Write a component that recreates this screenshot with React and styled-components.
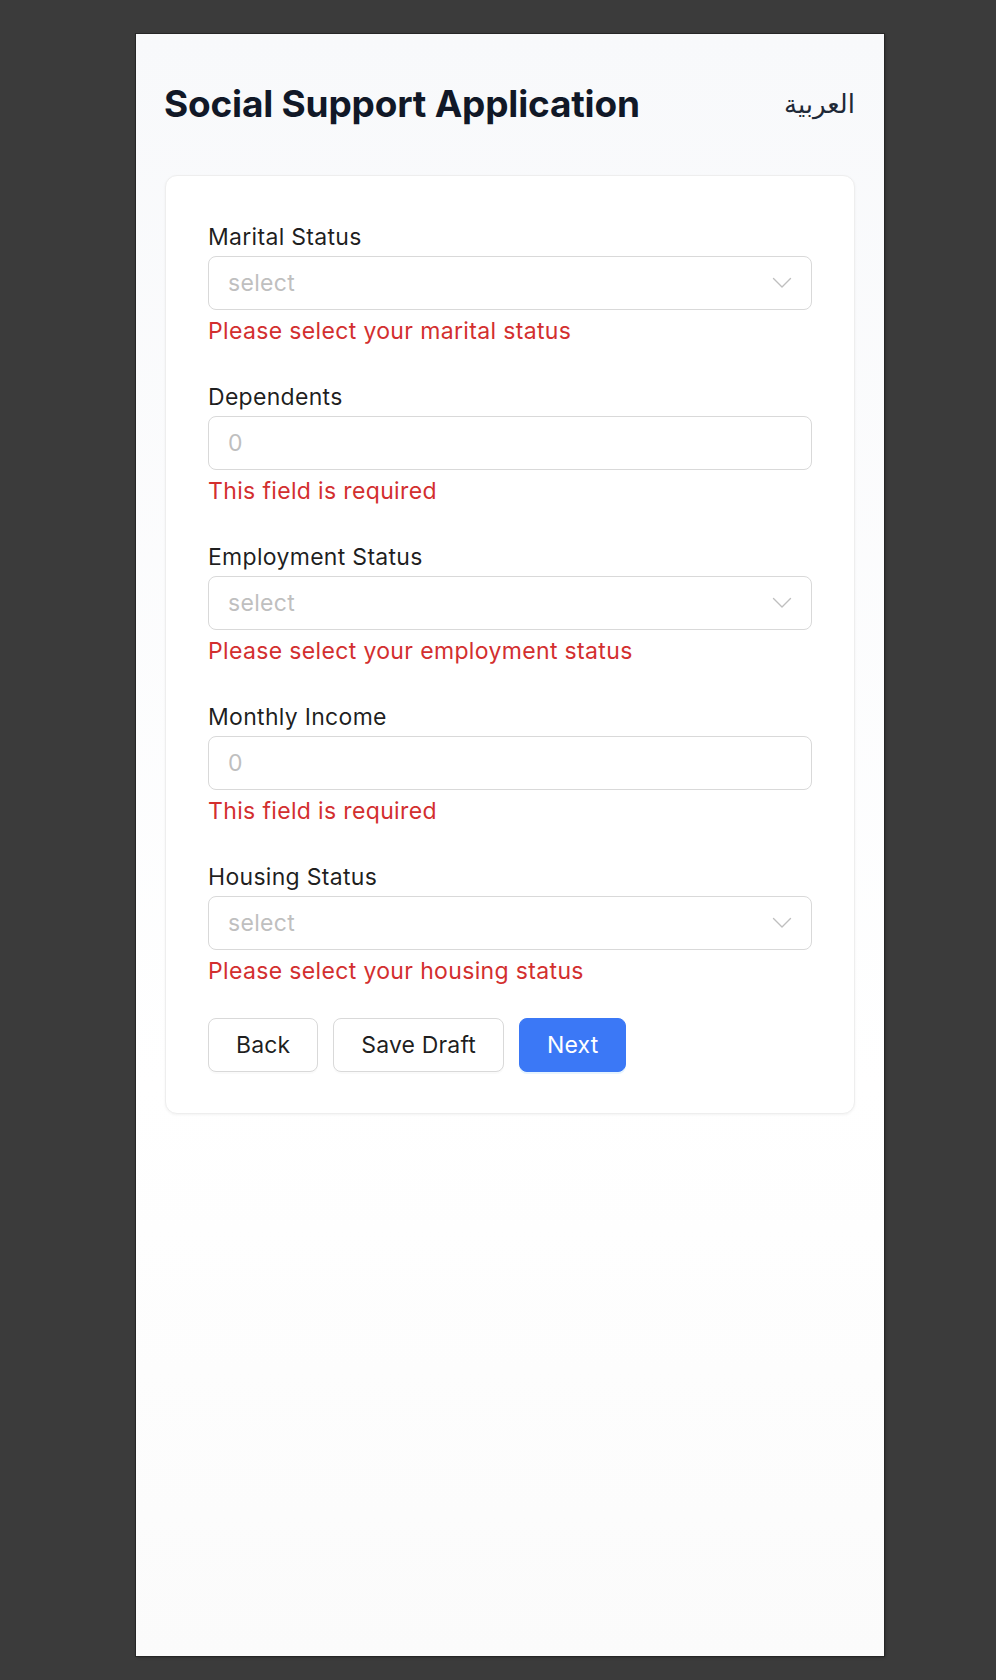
import React from "react";
import styled, { createGlobalStyle } from "styled-components";

const GlobalStyle = createGlobalStyle`
	body {
		margin: 0;
		background: #3b3b3b;
		font-family: Inter, "Noto Sans", sans-serif;
	}
`;

const fields = [
	{ label: "Marital Status", type: "select", placeholder: "select", error: "Please select your marital status" },
	{ label: "Dependents", type: "input", placeholder: "0", error: "This field is required" },
	{ label: "Employment Status", type: "select", placeholder: "select", error: "Please select your employment status" },
	{ label: "Monthly Income", type: "input", placeholder: "0", error: "This field is required" },
	{ label: "Housing Status", type: "select", placeholder: "select", error: "Please select your housing status" },
];

const Chevron = () => (
	<svg width="20" height="12" viewBox="0 0 20 12" fill="none">
		<polyline
			points="1.5,1.5 10,10 18.5,1.5"
			stroke="#bfbfbf"
			strokeWidth="1.4"
			strokeLinejoin="round"
			strokeLinecap="round"
		/>
	</svg>
);

const Field = ({ label, type, placeholder, error }) => (
	<FieldBlock>
		<Label>{label}</Label>
		<Control>
			<Placeholder>{placeholder}</Placeholder>
			{type === "select" && <Chevron />}
		</Control>
		<ErrorText>{error}</ErrorText>
	</FieldBlock>
);

const App = () => {
	return (
		<>
			<GlobalStyle />
			<Frame>
				<Window>
					<Header>
						<Title>Social Support Application</Title>
						<LangSwitch lang="ar" dir="rtl">العربية</LangSwitch>
					</Header>
					<Card>
						<Fields>
							{fields.map((f) => (
								<Field key={f.label} {...f} />
							))}
						</Fields>
						<ButtonRow>
							<Button>Back</Button>
							<Button>Save Draft</Button>
							<Button primary>Next</Button>
						</ButtonRow>
					</Card>
				</Window>
			</Frame>
		</>
	);
};

export default App;

const Frame = styled.div`
	padding: 34px 112px 24px 136px;
	box-sizing: border-box;
	height: 1680px;
`;

const Window = styled.div`
	width: 748px;
	height: 1622px;
	background: linear-gradient(to bottom, #f8f9fb 0%, #ffffff 65%, #fbfbfb 100%);
	box-shadow: 0 0 0 1px #262626, 1px 1px 3px rgba(0, 0, 0, 0.4);
	overflow: hidden;
`;

const Header = styled.div`
	display: flex;
	align-items: center;
	justify-content: space-between;
	padding: 46px 29px 0 28px;
	height: 48px;
`;

const Title = styled.h1`
	margin: 0;
	font-size: 37px;
	line-height: 48px;
	font-weight: 700;
	letter-spacing: -0.2px;
	color: #111827;
`;

const LangSwitch = styled.span`
	font-family: "DejaVu Sans", "Noto Sans", sans-serif;
	font-size: 26px;
	color: #1f2937;
	cursor: pointer;
`;

const Card = styled.div`
	margin: 47px 29px 0 29px;
	padding: 47px 42px 41px 42px;
	background: #fff;
	border: 1px solid #eeeeee;
	border-radius: 12px;
	box-shadow: 0 1px 3px rgba(0, 0, 0, 0.05);
`;

const Fields = styled.div`
	display: flex;
	flex-direction: column;
	gap: 38px;
`;

const FieldBlock = styled.div`
	display: flex;
	flex-direction: column;
`;

const Label = styled.label`
	font-size: 23px;
	line-height: 28px;
	letter-spacing: 0.3px;
	color: rgba(0, 0, 0, 0.88);
	margin-bottom: 5px;
`;

const Control = styled.div`
	height: 54px;
	box-sizing: border-box;
	border: 1px solid #d9d9d9;
	border-radius: 8px;
	background: #fff;
	display: flex;
	align-items: center;
	justify-content: space-between;
	padding: 0 19px 0 19px;
`;

const Placeholder = styled.span`
	font-size: 23px;
	letter-spacing: 0.3px;
	color: #bfbfbf;
`;

const ErrorText = styled.div`
	margin-top: 7px;
	font-size: 23px;
	line-height: 28px;
	letter-spacing: 0.35px;
	color: #d32f2f;
`;

const ButtonRow = styled.div`
	display: flex;
	gap: 15px;
	margin-top: 33px;
`;

const Button = styled.button`
	height: 54px;
	padding: 0 27px;
	font-family: Inter, "Noto Sans", sans-serif;
	font-size: 23px;
	letter-spacing: 0.15px;
	border-radius: 8px;
	cursor: pointer;
	border: 1px solid ${(p) => (p.primary ? "#3b78f6" : "#d9d9d9")};
	background: ${(p) => (p.primary ? "#3b78f6" : "#fff")};
	color: ${(p) => (p.primary ? "#fff" : "rgba(0, 0, 0, 0.88)")};
	box-shadow: ${(p) =>
		p.primary ? "0 2px 0 rgba(5, 145, 255, 0.1)" : "0 2px 0 rgba(0, 0, 0, 0.02)"};
`;
